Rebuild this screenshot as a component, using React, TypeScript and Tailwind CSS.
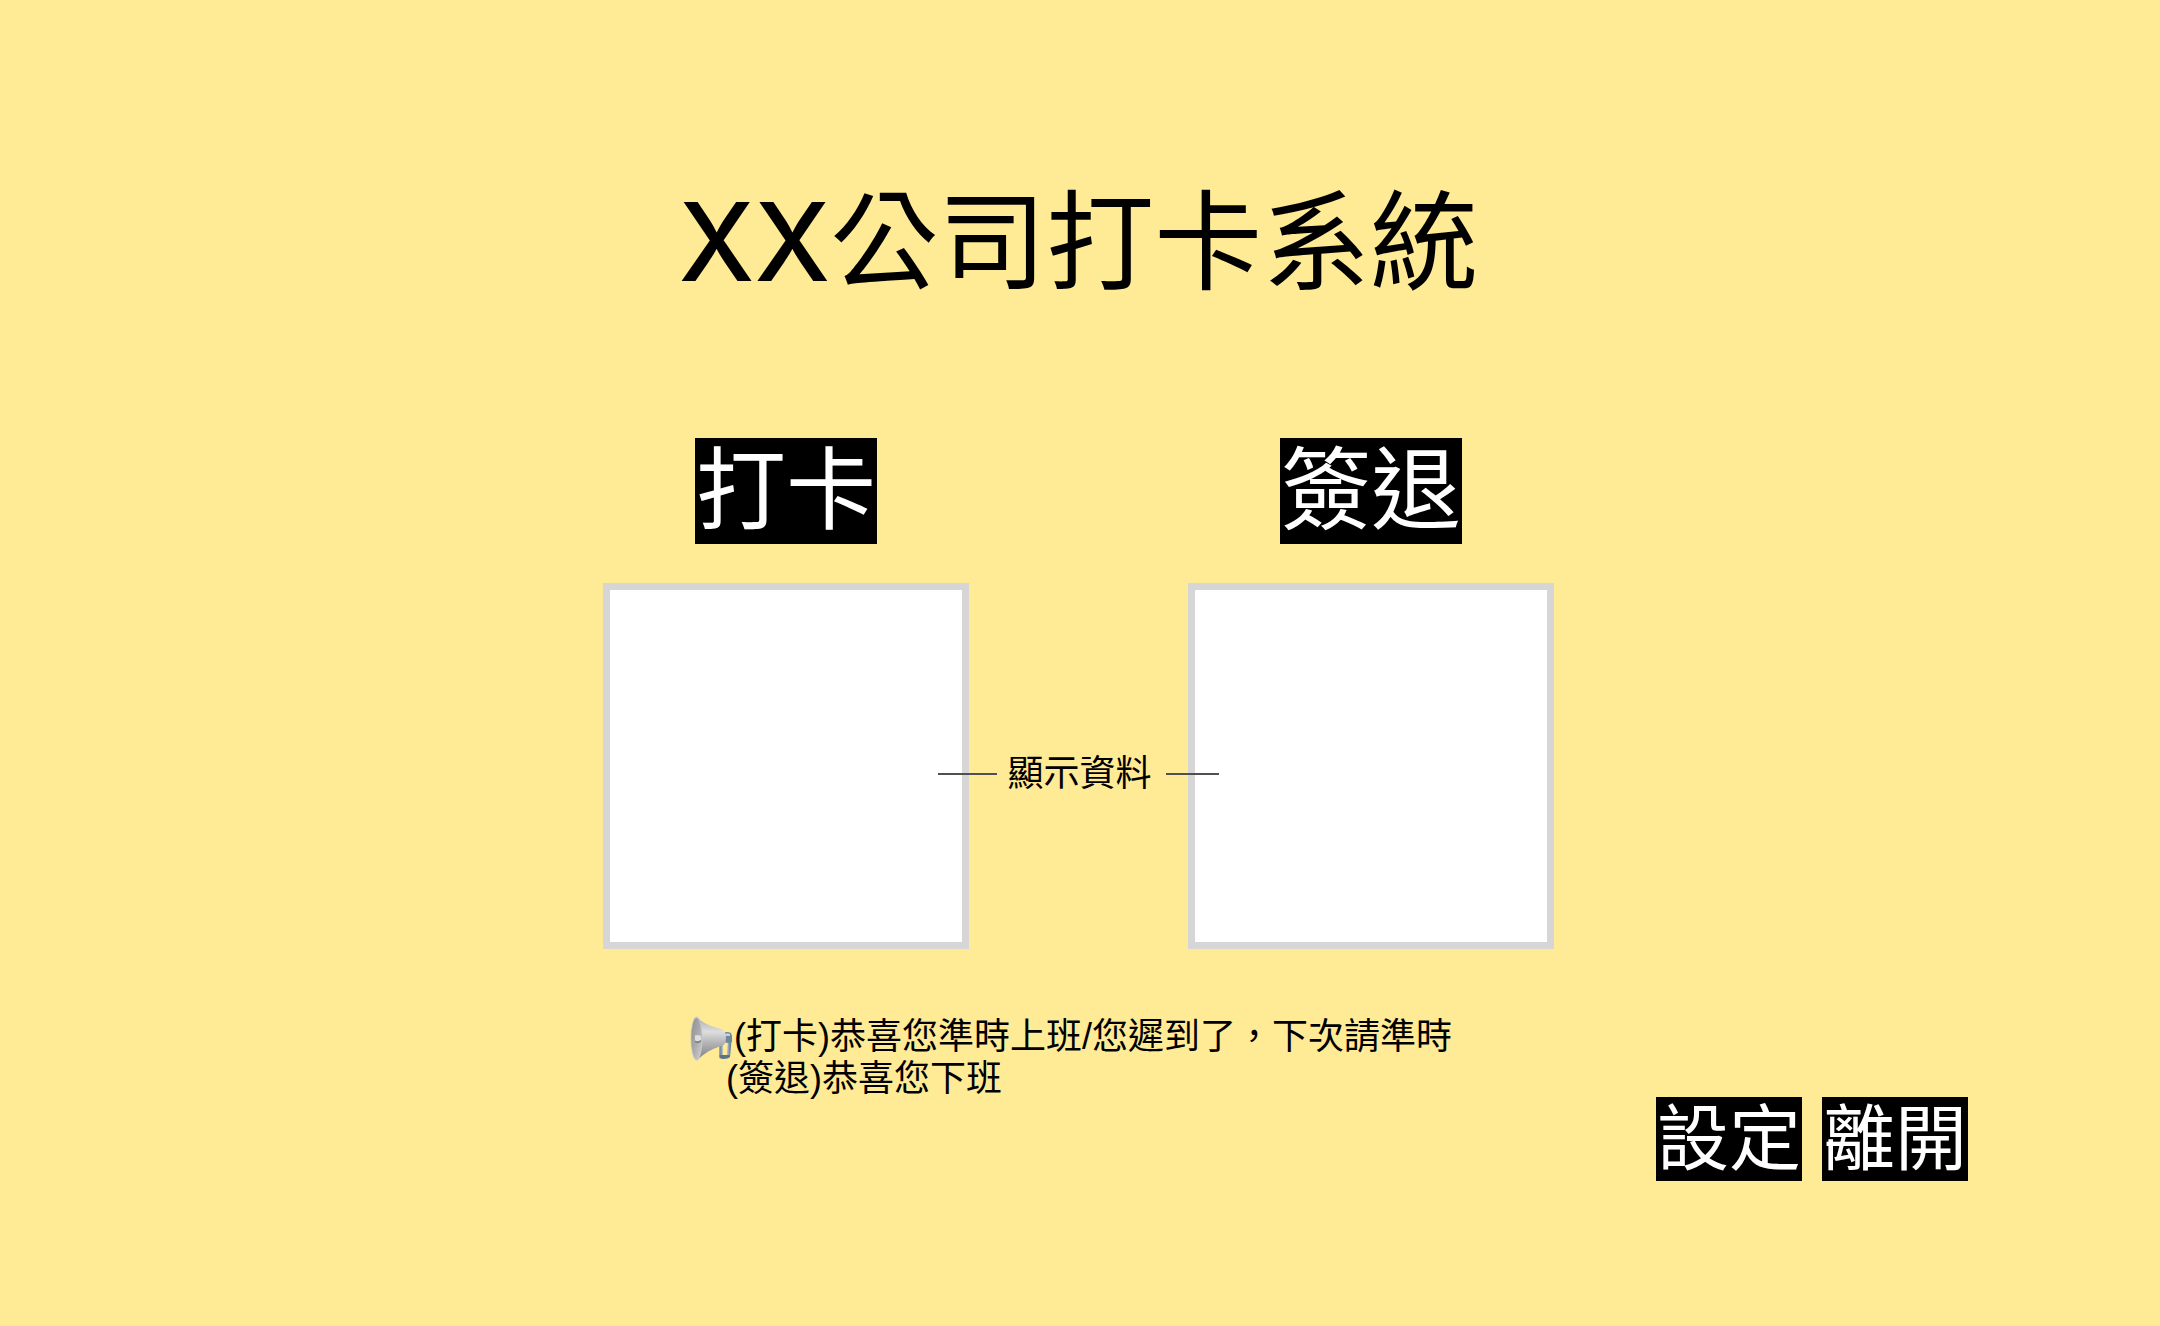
import React from "react";

function Megaphone() {
  return (
    <svg viewBox="0 0 44 46" className="h-[46px] w-[44px] shrink-0" role="img" aria-label="megaphone">
      <defs>
        <linearGradient id="horn" x1="0" y1="0" x2="0" y2="1">
          <stop offset="0" stopColor="#a9a9aa" />
          <stop offset="0.35" stopColor="#dededf" />
          <stop offset="0.6" stopColor="#b4b4b6" />
          <stop offset="1" stopColor="#7c7c7e" />
        </linearGradient>
        <linearGradient id="bell" x1="0" y1="0" x2="1" y2="1">
          <stop offset="0" stopColor="#8f8f91" />
          <stop offset="0.5" stopColor="#a9a9ab" />
          <stop offset="1" stopColor="#d0d0d2" />
        </linearGradient>
        <linearGradient id="grip" x1="0" y1="0" x2="1" y2="0">
          <stop offset="0" stopColor="#7d93a5" />
          <stop offset="0.5" stopColor="#dcecf6" />
          <stop offset="1" stopColor="#6f8496" />
        </linearGradient>
      </defs>
      <path d="M31 24 V39 Q31 41 33 41 H36 Q38 41 38.500 39 L40 22" fill="none" stroke="url(#grip)" strokeWidth="3.500" />
      <path d="M29.500 39 H40 V41 Q35 44.500 29.500 42 Z" fill="#5f7384" />
      <path d="M34 17 Q37 15 41 17 L42 20 V26 L37 27 L34 26 Z" fill="#71879a" />
      <path d="M35 18 Q38 16.500 40 18 L40 20 L35 20 Z" fill="#bdd3e2" />
      <path d="M7 0.500 C12 7 20 10 31 13 Q36 15 36 22 Q36 29 31 30 C22 33 14 37 7 44.500 Z" fill="url(#horn)" />
      <ellipse cx="6.500" cy="22.500" rx="6" ry="22" fill="#c9c9cb" />
      <ellipse cx="6.500" cy="22.500" rx="5.200" ry="20.500" fill="url(#bell)" />
      <path d="M5 19.500 Q9 18 11 20.500 V24.500 Q8 26.500 5 25.500 Z" fill="#dededf" />
      <path d="M5 24.500 Q8 26 11 24 V26 Q8 28 5 26.500 Z" fill="#858587" />
    </svg>
  );
}

function ClockPanel({ label }: { label: string }) {
  return (
    <section aria-label={label} className="flex flex-col items-center gap-[39px]">
      <button type="button" className="h-[106px] w-[182px] bg-black text-[90px] leading-[106px] text-white">
        {label}
      </button>
      <div className="size-[366px] border-[7px] border-[#d6d6d6] bg-white" />
    </section>
  );
}

function FooterButton({ label }: { label: string }) {
  return (
    <button type="button" className="h-[84px] w-[146px] bg-black text-[72px] leading-[84px] text-white">
      {label}
    </button>
  );
}

export default function App() {
  return (
    <main className="flex min-h-screen flex-col bg-[#ffea96] pt-[182px] font-['Liberation_Sans','Noto_Sans_CJK_TC',sans-serif] text-black">
      <h1 className="pr-[3px] text-center font-['Inter','Noto_Sans_CJK_TC',sans-serif] text-[108px] leading-[120px]">
        <span className="font-medium">XX</span>公司打卡系統
      </h1>

      <div className="mt-[136px] flex items-end justify-center pr-[3px]">
        <ClockPanel label="打卡" />
        <div className="z-10 -mx-[31px] flex h-[366px] w-[281px] items-center justify-between pt-[15px]">
          <span className="h-[2px] w-[59px] bg-[#505050]" />
          <p className="mr-1 text-[36px] leading-[42px]">顯示資料</p>
          <span className="h-[2px] w-[53px] bg-[#505050]" />
        </div>
        <ClockPanel label="簽退" />
      </div>

      <div className="mt-[67px] flex justify-center">
        <div className="flex w-[780px] text-[36px] leading-[42px]">
          <Megaphone />
          <div className="whitespace-nowrap">
            <p>(打卡)恭喜您準時上班/您遲到了，下次請準時</p>
            <p className="-ml-2">(簽退)恭喜您下班</p>
          </div>
        </div>
      </div>

      <footer className="-mt-[3px] flex justify-end gap-5 pr-[192px]">
        <FooterButton label="設定" />
        <FooterButton label="離開" />
      </footer>
    </main>
  );
}
